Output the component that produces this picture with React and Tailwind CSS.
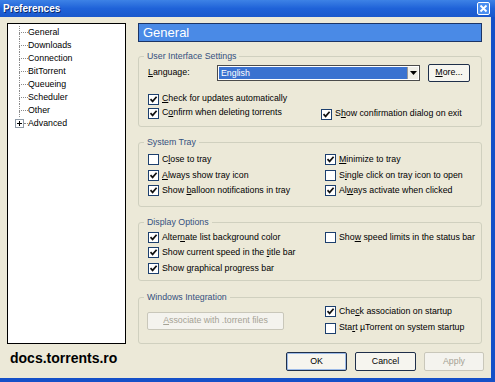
import React from "react";

const FONT = "font-['Liberation_Sans',Arial,sans-serif]";

const Check = ({ checked }) => (
  <span className="w-[11px] h-[11px] shrink-0 border border-[#1c3f6e] bg-white flex items-center justify-center">
    {checked && (
      <svg width="9" height="9" viewBox="0 0 9 9">
        <path d="M1.5 4.2 L3.6 6.4 L7.6 1.8" fill="none" stroke="#111" strokeWidth="1.7" />
      </svg>
    )}
  </span>
);

const U = ({ children }) => <span className="underline underline-offset-[1px]">{children}</span>;

const CB = ({ checked, children, className = "" }) => (
  <div className={"flex items-center whitespace-nowrap " + className}>
    <Check checked={checked} />
    <span className="ml-[3px]">{children}</span>
  </div>
);

const Group = ({ title, className = "", children }) => (
  <fieldset className={"border border-[#d0d0bf] rounded-[3px] p-0 m-0 min-w-0 " + className}>
    <legend className="ml-[5px] px-[3px] leading-[11px] text-[#34507e]">{title}</legend>
    {children}
  </fieldset>
);

const treeItems = ["General", "Downloads", "Connection", "BitTorrent", "Queueing", "Scheduler", "Other"];

export default function App() {
  return (
    <div className={"w-[495px] h-[382px] flex flex-col text-[8.8px] text-black " + FONT}>
      {/* title bar */}
      <div className="h-[17px] shrink-0 flex items-center justify-between pl-[3px] pr-[5px] bg-linear-to-b from-[#3d82e6] via-[#1f62d8] to-[#1a58cc]">
        <span className="text-white font-bold text-[10px] leading-none [text-shadow:1px_1px_0_#0b2a6b]">Preferences</span>
        <span className="w-[13px] h-[13px] border border-white rounded-[2px] bg-[#4a8ef0] flex items-center justify-center">
          <svg width="9" height="9" viewBox="0 0 9 9">
            <path d="M1.5 1.5 L7.5 7.5 M7.5 1.5 L1.5 7.5" stroke="#fff" strokeWidth="1.8" />
          </svg>
        </span>
      </div>

      {/* body */}
      <div className="flex-1 flex flex-col bg-[#ece9d8] border-r-[4px] border-b-[4px] border-[#1550c8]">
        <div className="flex pt-[6px]">
          {/* tree */}
          <div className="ml-[7px] w-[119px] h-[321px] border border-black bg-white pt-[2px] shrink-0">
            {treeItems.map((t) => (
              <div key={t} className="flex h-[13px]">
                <div className="w-[11px] shrink-0" />
                <div className="w-[9px] shrink-0 flex flex-col">
                  <div className="h-[7px] border-l border-b border-dotted border-[#8a8a8a]" />
                  <div className="flex-1 border-l border-dotted border-[#8a8a8a]" />
                </div>
                <span className="leading-[13px]">{t}</span>
              </div>
            ))}
            <div className="flex h-[13px] items-center">
              <div className="w-[7px] shrink-0" />
              <div className="w-[9px] h-[9px] shrink-0 border border-[#8e9aa6] bg-white flex items-center justify-center">
                <svg width="7" height="7" viewBox="0 0 7 7">
                  <path d="M1 3.5 H6 M3.5 1 V6" stroke="#000" strokeWidth="1" />
                </svg>
              </div>
              <div className="w-[4px] h-[1px] border-t border-dotted border-[#8a8a8a]" />
              <span className="leading-[13px]">Advanced</span>
            </div>
          </div>

          {/* right column */}
          <div className="ml-[12px] w-[344px] flex flex-col">
            <div className="h-[19px] border border-[#1b3466] bg-[#4a8ae6] text-white text-[13px] leading-[17px] pl-[4px]">
              General
            </div>

            <Group title="User Interface Settings" className="mt-[9px]">
              <div className="pl-[9px] pb-[6px]">
                <div className="mt-[2px] h-[18px] flex items-center">
                  <span className="w-[69px]">
                    <U>L</U>anguage:
                  </span>
                  <div className="w-[203px] h-[16px] border border-[#4b4b4b] bg-white flex p-[1px]">
                    <div className="flex-1 bg-[#3a72d0] text-white leading-[12px] pl-[2px]">English</div>
                    <div className="w-[11px] bg-[#f0efe8] flex items-center justify-center border-l border-[#999]">
                      <svg width="7" height="4" viewBox="0 0 7 4">
                        <path d="M0 0 H7 L3.5 4 Z" fill="#000" />
                      </svg>
                    </div>
                  </div>
                  <div className="ml-[8px] w-[42px] h-[18px] border border-[#1f2f4a] rounded-[2px] bg-[#f6f5ef] flex items-center justify-center">
                    <span>
                      <U>M</U>ore...
                    </span>
                  </div>
                </div>
                <div className="mt-[10px] h-[14px] flex items-center">
                  <CB checked>
                    <U>C</U>heck for updates automatically
                  </CB>
                </div>
                <div className="h-[14px] flex items-center">
                  <CB checked className="w-[173px]">
                    C<U>o</U>nfirm when deleting torrents
                  </CB>
                  <CB checked className="mt-[2px]">
                    S<U>h</U>ow confirmation dialog on exit
                  </CB>
                </div>
              </div>
            </Group>

            <Group title="System Tray" className="mt-[10px]">
              <div className="pl-[9px] pt-[4px] pb-[7px] grid grid-cols-[177px_1fr]">
                <CB className="h-[15.5px]">
                  C<U>l</U>ose to tray
                </CB>
                <CB checked className="h-[15.5px]">
                  <U>M</U>inimize to tray
                </CB>
                <CB checked className="h-[15.5px]">
                  <U>A</U>lways show tray icon
                </CB>
                <CB className="h-[15.5px]">
                  S<U>i</U>ngle click on tray icon to open
                </CB>
                <CB checked className="h-[15.5px]">
                  Show <U>b</U>alloon notifications in tray
                </CB>
                <CB checked className="h-[15.5px]">
                  Al<U>w</U>ays activate when clicked
                </CB>
              </div>
            </Group>

            <Group title="Display Options" className="mt-[10px]">
              <div className="pl-[9px] pt-[2px] pb-[4px] grid grid-cols-[177px_1fr]">
                <CB checked className="h-[15.5px]">
                  Alter<U>n</U>ate list background color
                </CB>
                <CB className="h-[15.5px]">
                  Sho<U>w</U> speed limits in the status bar
                </CB>
                <CB checked className="h-[15.5px]">
                  Show current speed in the <U>t</U>itle bar
                </CB>
                <div />
                <CB checked className="h-[15.5px]">
                  Show <U>g</U>raphical progress bar
                </CB>
              </div>
            </Group>

            <Group title="Windows Integration" className="mt-[11px]">
              <div className="pl-[8px] pb-[7px] flex">
                <div className="w-[178px]">
                  <div className="mt-[9px] w-[137px] h-[18px] border border-[#c9c7ba] rounded-[2px] bg-[#f4f3ee] text-[#a5a294] flex items-center justify-center">
                    <span>
                      <U>A</U>ssociate with .torrent files
                    </span>
                  </div>
                </div>
                <div className="flex flex-col">
                  <CB checked className="h-[17px]">
                    Che<U>c</U>k association on startup
                  </CB>
                  <CB className="h-[16px]">
                    Sta<U>r</U>t µTorrent on system startup
                  </CB>
                </div>
              </div>
            </Group>
          </div>
        </div>

        {/* bottom row */}
        <div className="mt-[8px] h-[19px] flex items-center">
          <span className="ml-[10px] mb-[7px] font-bold text-[14px] leading-none">docs.torrents.ro</span>
          <div className="ml-auto mr-[7px] flex gap-[8px]">
            <div className="w-[61px] h-[19px] border border-[#1f2f4a] rounded-[2px] bg-[#f6f5ef] flex items-center justify-center shadow-[inset_0_0_0_1px_#9dbbe8]">
              OK
            </div>
            <div className="w-[61px] h-[19px] border border-[#1f2f4a] rounded-[2px] bg-[#f6f5ef] flex items-center justify-center">
              Cancel
            </div>
            <div className="w-[60px] h-[19px] border border-[#c9c7ba] rounded-[2px] bg-[#f4f3ee] text-[#a5a294] flex items-center justify-center">
              Apply
            </div>
          </div>
        </div>
      </div>
    </div>
  );
}
